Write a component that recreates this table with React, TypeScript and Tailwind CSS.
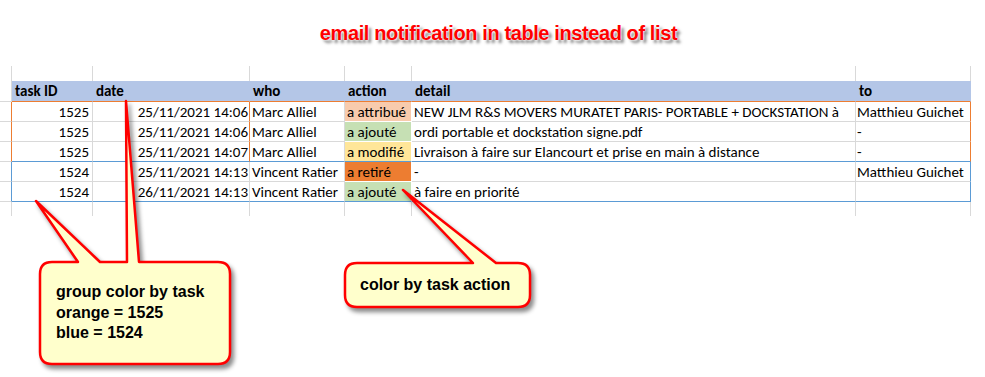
import React from "react";

type Row = {
  id: string;
  date: string;
  who: string;
  action: string;
  actionBg: string;
  detail: string;
  to: string;
  group: "orange" | "blue";
  last: boolean;
};

const rows: Row[] = [
  { id: "1525", date: "25/11/2021 14:06", who: "Marc Alliel", action: "a attribué", actionBg: "bg-[#f8cbad]", detail: "NEW JLM R&S MOVERS MURATET PARIS- PORTABLE + DOCKSTATION à", to: "Matthieu Guichet", group: "orange", last: false },
  { id: "1525", date: "25/11/2021 14:06", who: "Marc Alliel", action: "a ajouté", actionBg: "bg-[#c6e0b4]", detail: "ordi portable et dockstation signe.pdf", to: "-", group: "orange", last: false },
  { id: "1525", date: "25/11/2021 14:07", who: "Marc Alliel", action: "a modifié", actionBg: "bg-[#ffe699]", detail: "Livraison à faire sur Elancourt et prise en main à distance", to: "-", group: "orange", last: true },
  { id: "1524", date: "25/11/2021 14:13", who: "Vincent Ratier", action: "a retiré", actionBg: "bg-[#ed7d31]", detail: "-", to: "Matthieu Guichet", group: "blue", last: false },
  { id: "1524", date: "26/11/2021 14:13", who: "Vincent Ratier", action: "a ajouté", actionBg: "bg-[#c6e0b4]", detail: "à faire en priorité", to: "", group: "blue", last: true },
];

const cols = ["w-[12px]", "w-[81px]", "w-[157px]", "w-[95px]", "w-[67px]", "w-[444px]", "w-[115px]"];

const GridRow = ({ h }: { h: string }) => (
  <div className={`flex ${h}`}>
    {cols.map((w, i) => (
      <div key={i} className={`${w} border-r border-[#d9d9d9]`} />
    ))}
  </div>
);

const Header = () => {
  const cell = "flex items-center pt-[1px] px-[3px] bg-[#b4c6e7] border-r border-r-transparent border-b border-b-[#ed7d31] font-bold";
  return (
    <div className="flex h-[21px]">
      <div className="w-[12px] border-r border-b border-[#d9d9d9]" />
      <div className={`w-[81px] ${cell}`}>task ID</div>
      <div className={`w-[157px] ${cell}`}>date</div>
      <div className={`w-[95px] ${cell}`}>who</div>
      <div className={`w-[67px] ${cell}`}>action</div>
      <div className={`w-[444px] ${cell}`}>detail</div>
      <div className={`w-[115px] ${cell}`}>to</div>
    </div>
  );
};

const DataRow = ({ row }: { row: Row }) => {
  const edge = row.group === "orange" ? "border-r-[#ed7d31]" : "border-r-[#5b9bd5]";
  const bottom = row.last ? "border-b-[#5b9bd5]" : "border-b-[#d9d9d9]";
  const base = `flex items-center pt-[1px] whitespace-nowrap overflow-hidden border-r border-b ${bottom}`;
  return (
    <div className="flex h-[20px]">
      <div className={`w-[12px] border-r border-b border-b-[#d9d9d9] ${edge}`} />
      <div className={`w-[81px] ${base} border-r-[#d9d9d9] justify-end pr-[3px]`}>{row.id}</div>
      <div className={`w-[157px] ${base} ${row.group === "orange" ? "border-r-[#ed7d31]" : "border-r-[#d9d9d9]"} justify-end pr-[1px]`}>
        {row.date}
      </div>
      <div className={`w-[95px] ${base} border-r-[#d9d9d9] pl-[2px]`}>{row.who}</div>
      <div className={`w-[67px] ${base} border-r-white ${row.last ? "" : "border-b-white"} ${row.actionBg} pl-[2px]`}>
        {row.action}
      </div>
      <div className={`w-[444px] ${base} border-r-[#d9d9d9] pl-[2px]`}>{row.detail}</div>
      <div className={`w-[115px] ${base} ${edge} pl-[1px]`}>{row.to}</div>
    </div>
  );
};

const Callouts = () => (
  <svg
    className="absolute left-0 top-0 pointer-events-none drop-shadow-[3px_4px_2px_rgba(0,0,0,0.45)]"
    width="985"
    height="377"
    viewBox="0 0 985 377"
  >
    <path
      d="M52 262 L78 262 L36 201 L100 262 L127 262 L126 101 L139 262 L218 262 Q230 262 230 274 L230 352 Q230 364 218 364 L52 364 Q40 364 40 352 L40 274 Q40 262 52 262 Z"
      fill="#ffffcc"
      stroke="#ff0000"
      strokeWidth="2.5"
      strokeLinejoin="round"
    />
    <path
      d="M357 263 L473 263 L403 190 L496 263 L518 263 Q530 263 530 275 L530 295 Q530 307 518 307 L357 307 Q345 307 345 295 L345 275 Q345 263 357 263 Z"
      fill="#ffffcc"
      stroke="#ff0000"
      strokeWidth="2.5"
      strokeLinejoin="round"
    />
  </svg>
);

export default function App() {
  return (
    <div className="relative w-[985px] h-[377px] bg-white overflow-hidden">
      <div className="h-[66px] flex items-center justify-center pl-[12px]">
        <span className="font-['Liberation_Sans',Arial,sans-serif] font-bold text-[20px] tracking-[-0.4px] text-[#ff0000] [text-shadow:0_0_2px_#fff,0_0_2px_#fff,3px_3px_3px_rgba(0,0,0,0.5)]">
          email notification in table instead of list
        </span>
      </div>

      <div className="w-[971px] text-[15px] leading-none text-black font-['Carlito',Calibri,Lato,sans-serif]">
        <GridRow h="h-[15px]" />
        <Header />
        {rows.map((r, i) => (
          <DataRow key={i} row={r} />
        ))}
        <GridRow h="h-[14px]" />
      </div>

      <Callouts />

      <div className="absolute left-[56px] top-[282px] font-['Liberation_Sans',Arial,sans-serif] font-bold text-[16px] leading-[20.5px] text-black">
        <div>group color by task</div>
        <div>orange = 1525</div>
        <div>blue = 1524</div>
      </div>
      <div className="absolute left-[360px] top-[275px] font-['Liberation_Sans',Arial,sans-serif] font-bold text-[16px] leading-[20px] text-black">
        color by task action
      </div>
    </div>
  );
}
